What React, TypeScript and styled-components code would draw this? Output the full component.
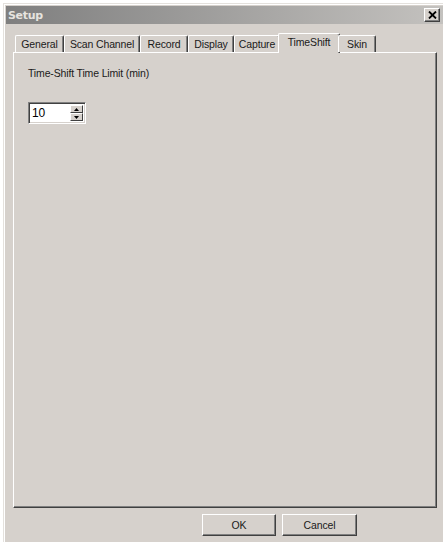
import React from 'react';
import styled, { createGlobalStyle } from 'styled-components';

const GlobalStyle = createGlobalStyle`
    html, body {
        margin: 0;
        padding: 0;
        background: #ffffff;
        overflow: hidden;
    }
    body {
        font-family: "Liberation Sans", Arial, sans-serif;
        font-size: 10.5px;
        letter-spacing: -0.15px;
        color: #1a1a1a;
    }
`;

const face = '#d6d1cc';

const Window = styled.div`
    margin: 3px 0 0 3px;
    width: 442px;
    height: 560px;
    box-sizing: border-box;
    background: ${face};
    border-top: 1px solid #e4e1dd;
    border-left: 1px solid #e4e1dd;
    box-shadow: inset 1px 1px 0 #ffffff;
    padding: 2px 0 0 2px;
    display: flex;
    flex-direction: column;
`;

const TitleBar = styled.div`
    height: 18px;
    display: flex;
    align-items: center;
    justify-content: space-between;
    padding: 0 5px 0 2px;
    background: linear-gradient(to right, #7f7f7f, #c4c2bf);
`;

const Caption = styled.span`
    font-family: "DejaVu Sans", "Liberation Sans", sans-serif;
    font-weight: bold;
    font-size: 11px;
    color: #e6e3df;
    letter-spacing: -0.3px;
`;

const CloseBox = styled.div`
    width: 16px;
    height: 14px;
    box-sizing: border-box;
    background: ${face};
    border-top: 1px solid #ffffff;
    border-left: 1px solid #ffffff;
    border-right: 1px solid #404040;
    border-bottom: 1px solid #404040;
    box-shadow: inset -1px -1px 0 #808080;
    display: flex;
    align-items: center;
    justify-content: center;
`;

const Content = styled.div`
    padding: 9px 0 0 7px;
    display: flex;
    flex-direction: column;
`;

const TabStrip = styled.div`
    display: flex;
    align-items: flex-end;
    height: 19px;
    padding-left: 2px;
    position: relative;
    z-index: 1;
`;

const Tab = styled.div<{ $w: number; $active?: boolean }>`
    width: ${p => p.$w}px;
    height: ${p => (p.$active ? 20 : 17)}px;
    margin: 0 ${p => (p.$active ? '-2px' : '0')};
    margin-bottom: ${p => (p.$active ? '-1px' : '0')};
    box-sizing: border-box;
    background: ${face};
    border-top: 1px solid #ffffff;
    border-left: 1px solid #ffffff;
    border-right: 1px solid #404040;
    box-shadow: inset -1px 0 0 #808080;
    border-radius: 2px 2px 0 0;
    display: flex;
    justify-content: center;
    padding-top: 2px;
    white-space: nowrap;
`;

const Panel = styled.div`
    width: 424px;
    height: 456px;
    box-sizing: border-box;
    background: ${face};
    border-top: 1px solid #ffffff;
    border-left: 1px solid #ffffff;
    border-right: 1px solid #404040;
    border-bottom: 1px solid #404040;
    box-shadow: inset -1px -1px 0 #808080;
    padding: 14px 0 0 14px;
    display: flex;
    flex-direction: column;
`;

const FieldLabel = styled.div`
    line-height: 13px;
`;

const SpinBox = styled.div`
    margin-top: 22px;
    width: 58px;
    height: 22px;
    box-sizing: border-box;
    background: #ffffff;
    border-top: 1px solid #808080;
    border-left: 1px solid #808080;
    border-right: 1px solid #ffffff;
    border-bottom: 1px solid #ffffff;
    box-shadow: inset 1px 1px 0 #404040, inset -1px -1px 0 ${face};
    display: flex;
    align-items: stretch;
    padding: 2px 2px 2px 3px;
`;

const SpinValue = styled.div`
    flex: 1;
    font-size: 12px;
    line-height: 16px;
    color: #000;
`;

const SpinButtons = styled.div`
    width: 13px;
    display: flex;
    flex-direction: column;
`;

const SpinButton = styled.div`
    flex: 1;
    box-sizing: border-box;
    background: ${face};
    border-top: 1px solid #ffffff;
    border-left: 1px solid #ffffff;
    border-right: 1px solid #404040;
    border-bottom: 1px solid #404040;
    display: flex;
    align-items: center;
    justify-content: center;
`;

const ButtonRow = styled.div`
    display: flex;
    gap: 6px;
    padding: 6px 0 0 189px;
`;

const PushButton = styled.div<{ $w: number }>`
    width: ${p => p.$w}px;
    height: 22px;
    box-sizing: border-box;
    background: ${face};
    border-top: 1px solid #ffffff;
    border-left: 1px solid #ffffff;
    border-right: 1px solid #404040;
    border-bottom: 1px solid #404040;
    box-shadow: inset -1px -1px 0 #808080;
    display: flex;
    align-items: center;
    justify-content: center;
`;

const tabs = [
    { label: 'General', w: 49 },
    { label: 'Scan Channel', w: 76 },
    { label: 'Record', w: 48 },
    { label: 'Display', w: 46 },
    { label: 'Capture', w: 46 },
    { label: 'TimeShift', w: 62, active: true },
    { label: 'Skin', w: 38 },
];

const Arrow = ({ up }: { up?: boolean }) => (
    <svg width="5" height="3" viewBox="0 0 5 3">
        <path d={up ? 'M2.5 0 L5 3 L0 3 Z' : 'M0 0 L5 0 L2.5 3 Z'} fill="#000" />
    </svg>
);

export default function App() {
    return (
        <>
            <GlobalStyle />
            <Window>
                <TitleBar>
                    <Caption>Setup</Caption>
                    <CloseBox>
                        <svg width="9" height="8" viewBox="0 0 9 8">
                            <path d="M1 0.5 L8 7.5 M8 0.5 L1 7.5" stroke="#000" strokeWidth="1.8" />
                        </svg>
                    </CloseBox>
                </TitleBar>
                <Content>
                    <TabStrip>
                        {tabs.map(t => (
                            <Tab key={t.label} $w={t.w} $active={t.active}>
                                {t.label}
                            </Tab>
                        ))}
                    </TabStrip>
                    <Panel>
                        <FieldLabel>Time-Shift Time Limit (min)</FieldLabel>
                        <SpinBox>
                            <SpinValue>10</SpinValue>
                            <SpinButtons>
                                <SpinButton><Arrow up /></SpinButton>
                                <SpinButton><Arrow /></SpinButton>
                            </SpinButtons>
                        </SpinBox>
                    </Panel>
                    <ButtonRow>
                        <PushButton $w={74}>OK</PushButton>
                        <PushButton $w={75}>Cancel</PushButton>
                    </ButtonRow>
                </Content>
            </Window>
        </>
    );
}
